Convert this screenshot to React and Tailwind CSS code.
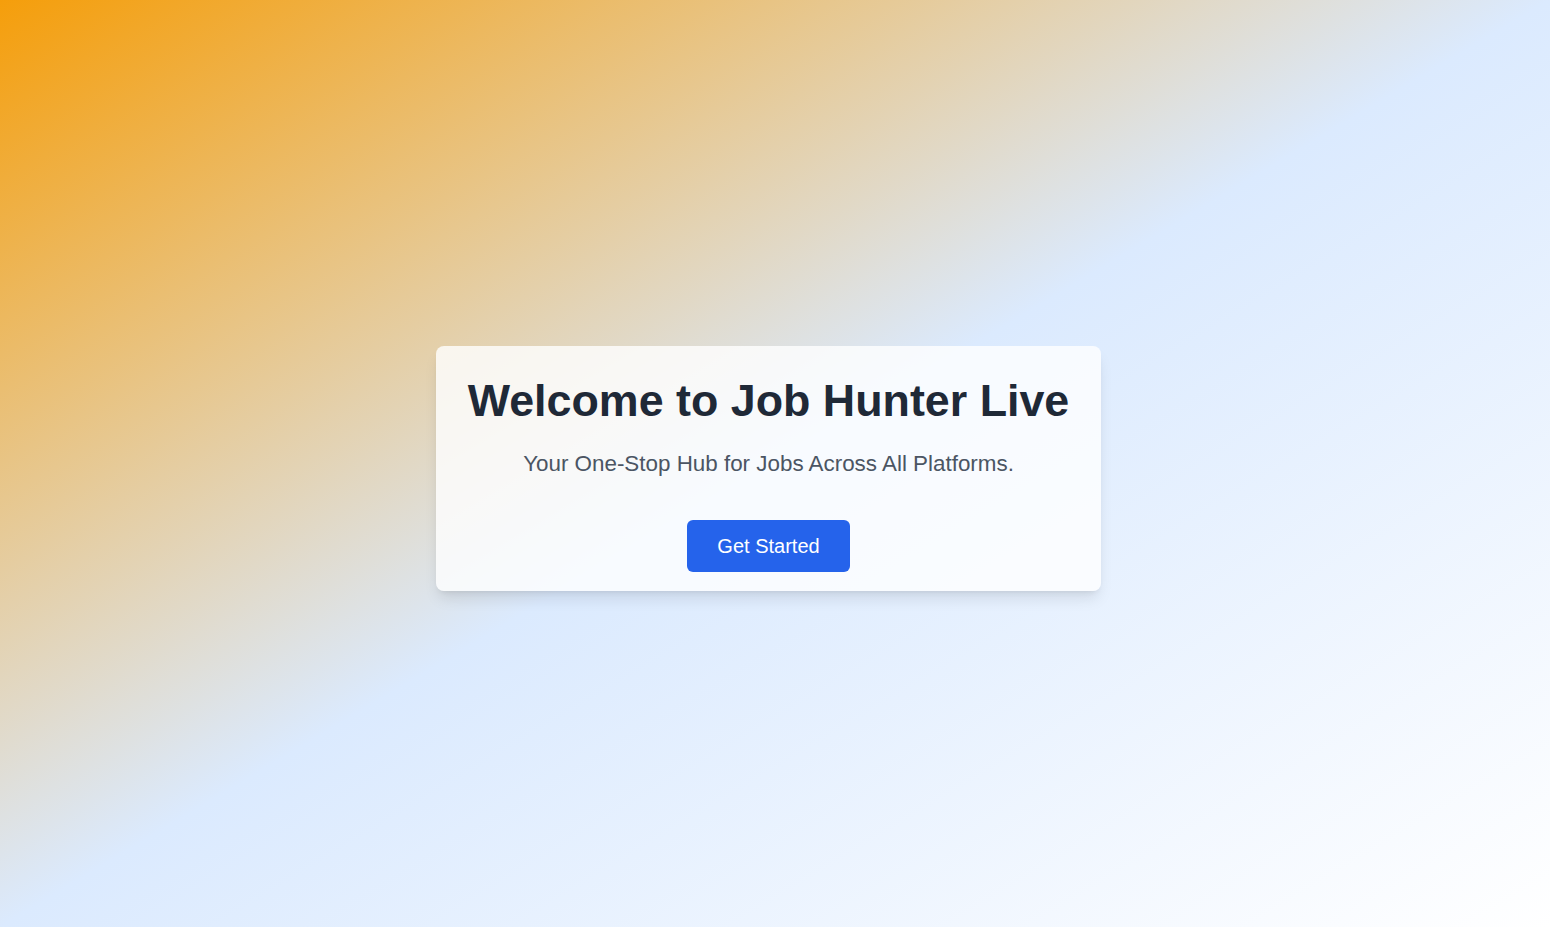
export default function App() {
  return (
    <div
      className="min-h-screen w-full flex items-center justify-center bg-[linear-gradient(to_bottom_right,#f59e0b,#dbeafe,#ffffff)] pr-[13px] pt-[10px]"
      style={{ fontFamily: '"Liberation Sans", Arial, sans-serif' }}
    >
      <div className="w-[665px] rounded-lg bg-white/80 shadow-lg px-8 pt-8 pb-[19px] flex flex-col items-center text-center">
        <h1 className="text-[2.8rem] leading-none font-bold text-[#1f2937] whitespace-nowrap">
          Welcome to Job Hunter Live
        </h1>
        <p className="mt-6 text-[1.4rem] leading-[1.5] text-[#4b5563] whitespace-nowrap">
          Your One-Stop Hub for Jobs Across All Platforms.
        </p>
        <button className="mt-10 rounded-md bg-[#2563eb] px-[30px] py-3 text-xl leading-7 text-white">
          Get Started
        </button>
      </div>
    </div>
  );
}
